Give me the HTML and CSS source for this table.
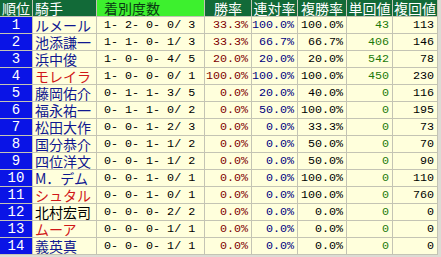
FILE: index.html
```html
<!DOCTYPE html>
<html lang="ja">
<head>
<meta charset="utf-8">
<link rel="stylesheet" href="styles.css">
</head>
<body>
<table class="stats">
  <colgroup>
    <col class="c-rank"><col class="c-name"><col class="c-rec"><col class="c-p1"><col class="c-p2"><col class="c-p3"><col class="c-v1"><col class="c-v2">
  </colgroup>
  <thead>
    <tr>
      <th class="h-dark h-left">順位</th>
      <th class="h-dark h-left">騎手</th>
      <th class="h-light h-left">着別度数</th>
      <th class="h-dark">勝率</th>
      <th class="h-dark">連対率</th>
      <th class="h-dark">複勝率</th>
      <th class="h-dark">単回値</th>
      <th class="h-dark">複回値</th>
    </tr>
  </thead>
  <tbody>
    <tr><td class="rank">1</td><td class="name blue">ルメール</td><td class="rec">1- 2- 0- 0/ 3</td><td class="num win">33.3%</td><td class="num ren">100.0%</td><td class="num">100.0%</td><td class="num tan">43</td><td class="num">113</td></tr>
    <tr><td class="rank">2</td><td class="name blue">池添謙一</td><td class="rec">1- 1- 0- 1/ 3</td><td class="num win">33.3%</td><td class="num ren">66.7%</td><td class="num">66.7%</td><td class="num tan">406</td><td class="num">146</td></tr>
    <tr><td class="rank">3</td><td class="name blue">浜中俊</td><td class="rec">1- 0- 0- 4/ 5</td><td class="num win">20.0%</td><td class="num ren">20.0%</td><td class="num">20.0%</td><td class="num tan">542</td><td class="num">78</td></tr>
    <tr><td class="rank">4</td><td class="name red">モレイラ</td><td class="rec">1- 0- 0- 0/ 1</td><td class="num win">100.0%</td><td class="num ren">100.0%</td><td class="num">100.0%</td><td class="num tan">450</td><td class="num">230</td></tr>
    <tr><td class="rank">5</td><td class="name blue">藤岡佑介</td><td class="rec">0- 1- 1- 3/ 5</td><td class="num win">0.0%</td><td class="num ren">20.0%</td><td class="num">40.0%</td><td class="num tan">0</td><td class="num">116</td></tr>
    <tr><td class="rank">6</td><td class="name blue">福永祐一</td><td class="rec">0- 1- 1- 0/ 2</td><td class="num win">0.0%</td><td class="num ren">50.0%</td><td class="num">100.0%</td><td class="num tan">0</td><td class="num">195</td></tr>
    <tr><td class="rank">7</td><td class="name blue">松田大作</td><td class="rec">0- 0- 1- 2/ 3</td><td class="num win">0.0%</td><td class="num ren">0.0%</td><td class="num">33.3%</td><td class="num tan">0</td><td class="num">73</td></tr>
    <tr><td class="rank">8</td><td class="name blue">国分恭介</td><td class="rec">0- 0- 1- 1/ 2</td><td class="num win">0.0%</td><td class="num ren">0.0%</td><td class="num">50.0%</td><td class="num tan">0</td><td class="num">70</td></tr>
    <tr><td class="rank">9</td><td class="name blue">四位洋文</td><td class="rec">0- 0- 1- 1/ 2</td><td class="num win">0.0%</td><td class="num ren">0.0%</td><td class="num">50.0%</td><td class="num tan">0</td><td class="num">90</td></tr>
    <tr><td class="rank">10</td><td class="name blue">M．デム</td><td class="rec">0- 0- 1- 0/ 1</td><td class="num win">0.0%</td><td class="num ren">0.0%</td><td class="num">100.0%</td><td class="num tan">0</td><td class="num">110</td></tr>
    <tr><td class="rank">11</td><td class="name red">シュタル</td><td class="rec">0- 0- 1- 0/ 1</td><td class="num win">0.0%</td><td class="num ren">0.0%</td><td class="num">100.0%</td><td class="num tan">0</td><td class="num">760</td></tr>
    <tr><td class="rank">12</td><td class="name black">北村宏司</td><td class="rec">0- 0- 0- 2/ 2</td><td class="num win">0.0%</td><td class="num ren">0.0%</td><td class="num">0.0%</td><td class="num tan">0</td><td class="num">0</td></tr>
    <tr><td class="rank">13</td><td class="name red">ムーア</td><td class="rec">0- 0- 0- 1/ 1</td><td class="num win">0.0%</td><td class="num ren">0.0%</td><td class="num">0.0%</td><td class="num tan">0</td><td class="num">0</td></tr>
    <tr><td class="rank">14</td><td class="name blue">義英真</td><td class="rec">0- 0- 0- 1/ 1</td><td class="num win">0.0%</td><td class="num ren">0.0%</td><td class="num">0.0%</td><td class="num tan">0</td><td class="num">0</td></tr>
  </tbody>
</table>
</body>
</html>
```

FILE: styles.css
```css
html, body {
  margin: 0;
  padding: 0;
  background: #dcdcd4;
  overflow: hidden;
}

.stats {
  margin: -1px 0 0 -1px;
  border-collapse: separate;
  border-spacing: 1px;
  background: #c4c4b4;
  table-layout: fixed;
  width: 439px;
  font-family: "Noto Sans CJK JP", sans-serif;
}

.c-rank { width: 32px; }
.c-name { width: 63px; }
.c-rec { width: 107px; }
.c-p1 { width: 46px; }
.c-p2 { width: 45px; }
.c-p3 { width: 48px; }
.c-v1 { width: 45px; }
.c-v2 { width: 44px; }

.stats th,
.stats td {
  height: 16px;
  padding: 0;
  line-height: 16px;
  white-space: nowrap;
}

.stats th {
  font-size: 14px;
  font-weight: normal;
  text-align: center;
  color: #ffffff;
}

.h-dark { background: #126a38; }
.h-light { background: #3df02e; color: #0a3a14 !important; }
.h-left { text-align: left !important; padding-left: 2px !important; }
.h-light.h-left { padding-left: 7px !important; }

.stats td {
  background: #ffffdc;
}

.stats td.rank {
  background: #0a14e6;
  color: #ffffff;
  text-align: center;
  font-family: "Liberation Mono", monospace;
  font-size: 14px;
}

.name {
  font-size: 14px;
  padding-left: 2px !important;
}
.blue { color: #101890; }
.red { color: #d01818; }
.black { color: #000000; }

.rec {
  font-family: "Liberation Mono", monospace;
  font-size: 11.7px;
  padding-left: 7px !important;
  white-space: pre !important;
  color: #000000;
}

.num {
  font-family: "Liberation Mono", monospace;
  font-size: 11.7px;
  text-align: right;
  padding-right: 3px !important;
  color: #000000;
}
.win { color: #800000; }
.ren { color: #000080; }
.tan { color: #1d7a0a; }
```
